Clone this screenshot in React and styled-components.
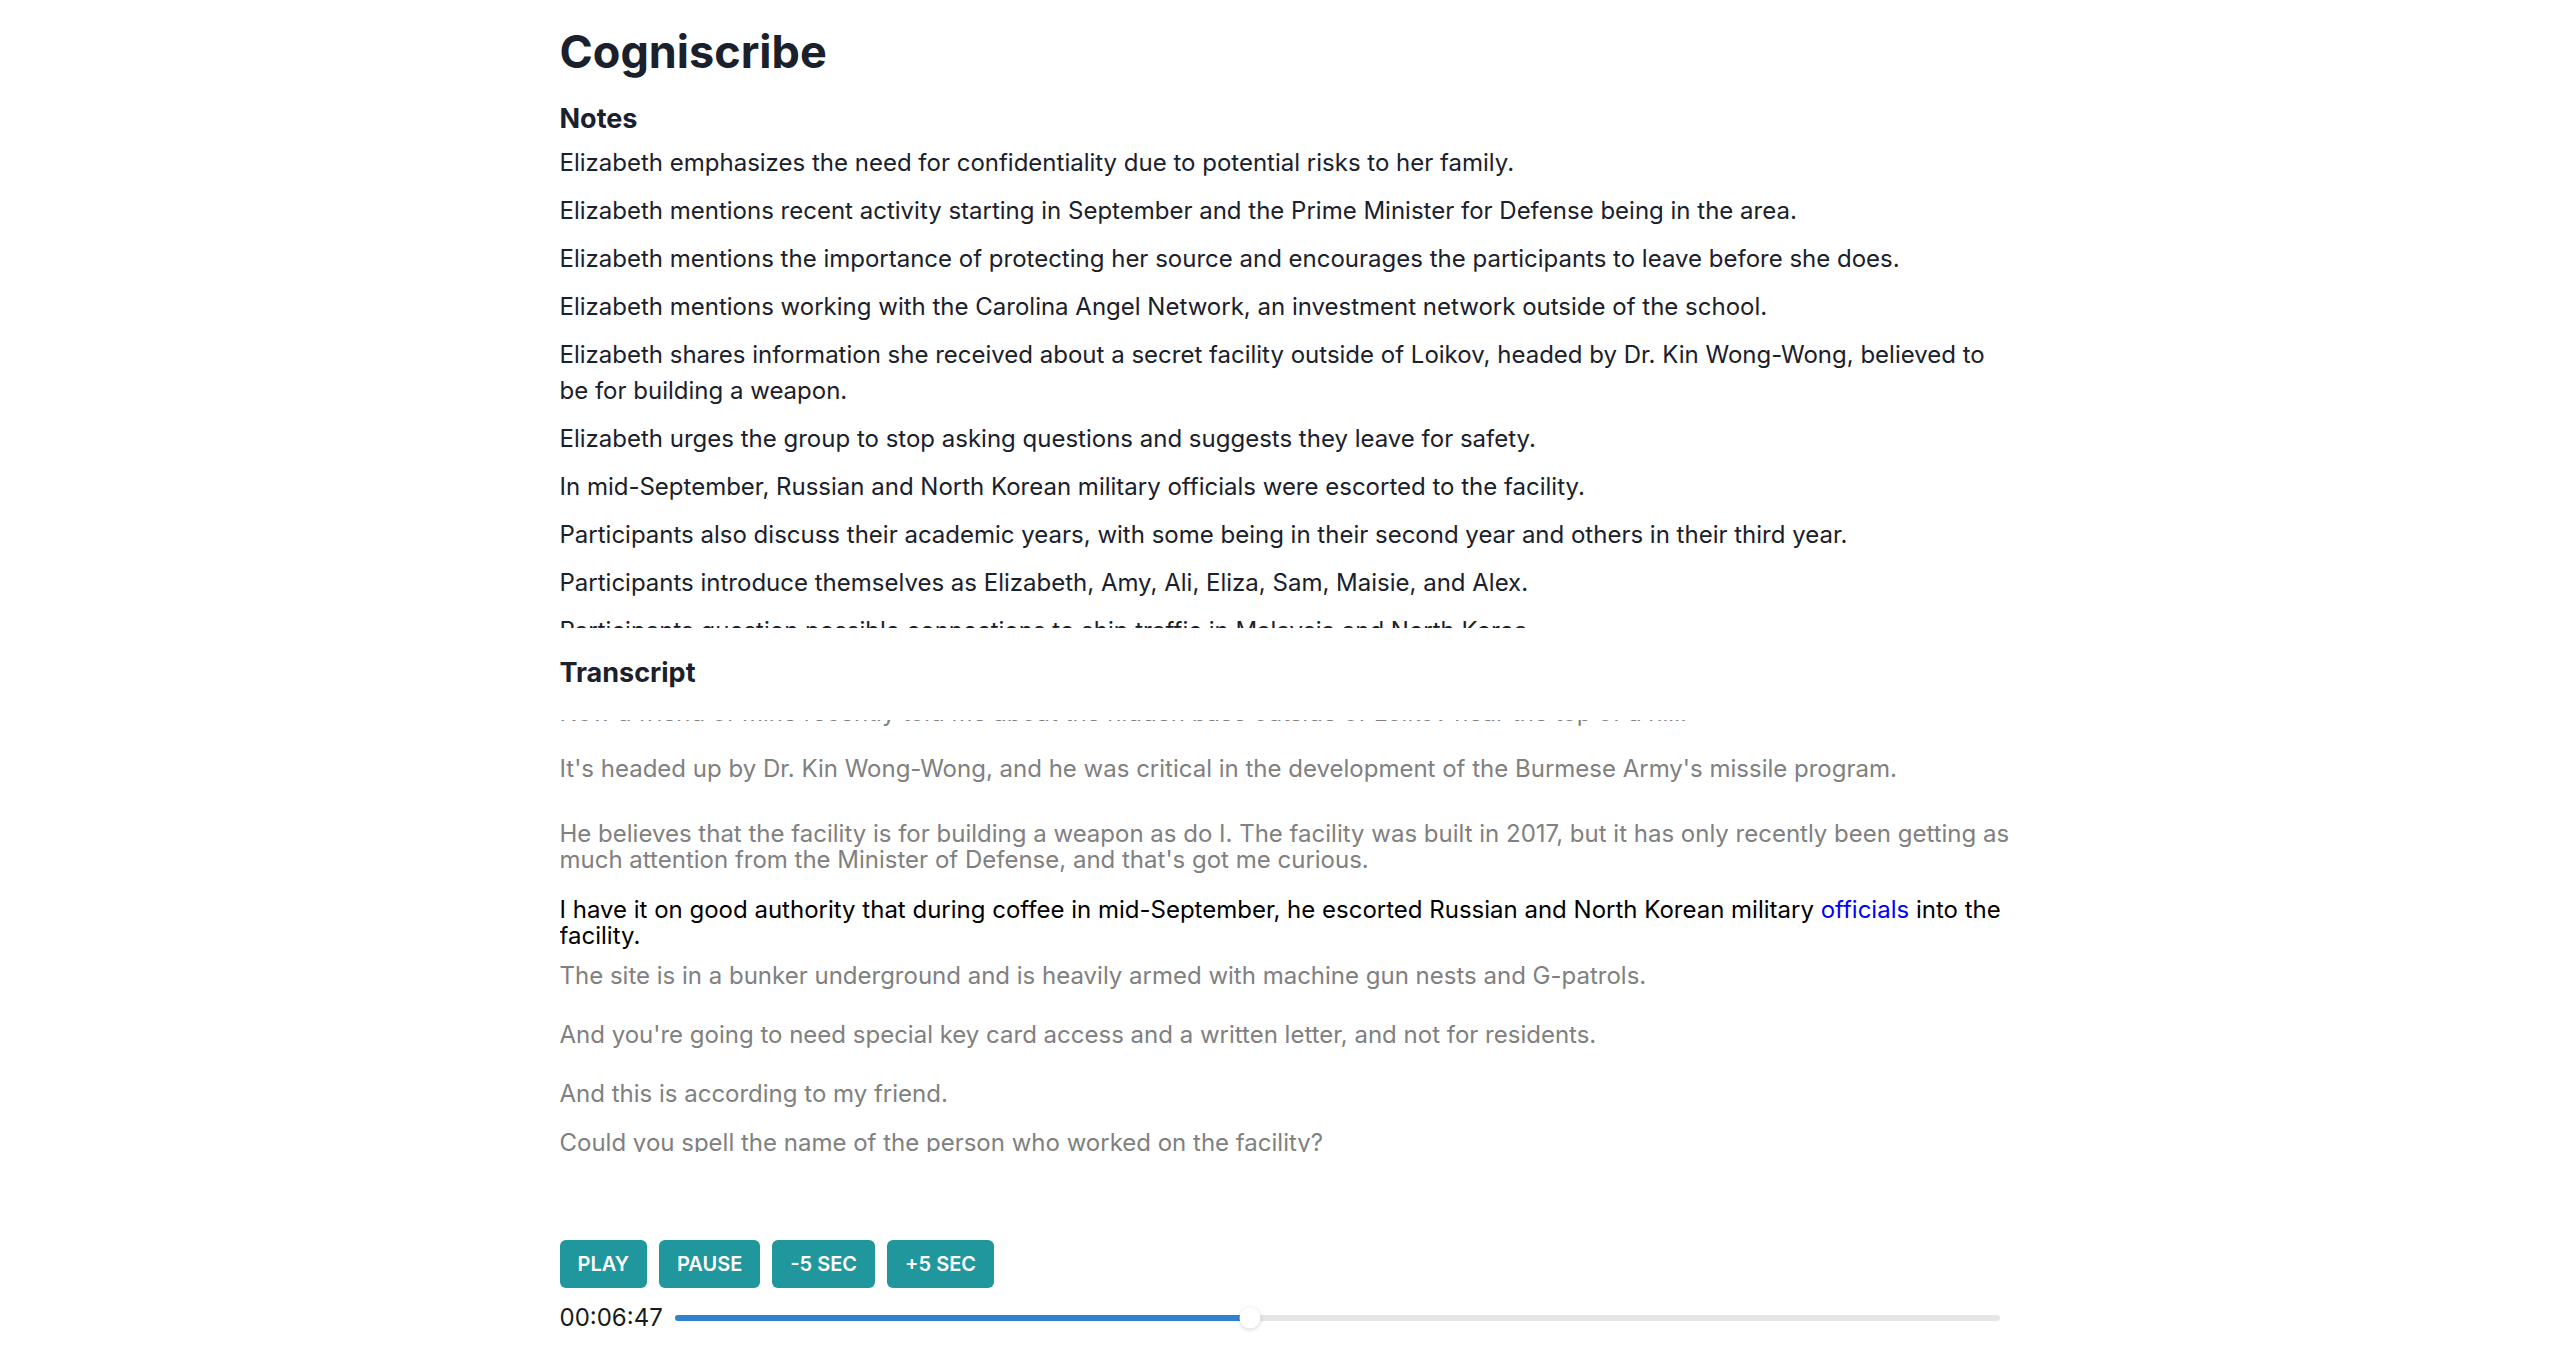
import styled, { createGlobalStyle } from "styled-components";

const GlobalStyle = createGlobalStyle`
  body {
    margin: 0;
    background: #ffffff;
    font-family: Inter, "Noto Sans", sans-serif;
    color: #1a202c;
  }
`;

const notes = [
  "Elizabeth emphasizes the need for confidentiality due to potential risks to her family.",
  "Elizabeth mentions recent activity starting in September and the Prime Minister for Defense being in the area.",
  "Elizabeth mentions the importance of protecting her source and encourages the participants to leave before she does.",
  "Elizabeth mentions working with the Carolina Angel Network, an investment network outside of the school.",
  "Elizabeth shares information she received about a secret facility outside of Loikov, headed by Dr. Kin Wong-Wong, believed to be for building a weapon.",
  "Elizabeth urges the group to stop asking questions and suggests they leave for safety.",
  "In mid-September, Russian and North Korean military officials were escorted to the facility.",
  "Participants also discuss their academic years, with some being in their second year and others in their third year.",
  "Participants introduce themselves as Elizabeth, Amy, Ali, Eliza, Sam, Maisie, and Alex.",
  "Participants question possible connections to ship traffic in Malaysia and North Korea.",
];

// gap = space above each segment, in px
const transcript = [
  { gap: 0, text: "Now a friend of mine recently told me about the hidden base outside of Loikov near the top of a hill." },
  { gap: 30, text: "It's headed up by Dr. Kin Wong-Wong, and he was critical in the development of the Burmese Army's missile program." },
  { gap: 39, text: "He believes that the facility is for building a weapon as do I. The facility was built in 2017, but it has only recently been getting as much attention from the Minister of Defense, and that's got me curious." },
  {
    gap: 24,
    active: true,
    text: "I have it on good authority that during coffee in mid-September, he escorted Russian and North Korean military ",
    word: "officials",
    rest: " into the facility.",
  },
  { gap: 14, text: "The site is in a bunker underground and is heavily armed with machine gun nests and G-patrols." },
  { gap: 33, text: "And you're going to need special key card access and a written letter, and not for residents." },
  { gap: 33, text: "And this is according to my friend." },
  { gap: 23, text: "Could you spell the name of the person who worked on the facility?" },
];

const position = 407;
const duration = 938;

const formatTime = (s) =>
  [Math.floor(s / 3600), Math.floor((s % 3600) / 60), s % 60]
    .map((n) => String(n).padStart(2, "0"))
    .join(":");

export default function App() {
  const pct = (position / duration) * 100;

  return (
    <>
      <GlobalStyle />
      <Page>
        <Title>Cogniscribe</Title>

        <SectionHeading $top={2} $bottom={-2}>Notes</SectionHeading>
        <NotesBox>
          {notes.map((n) => (
            <Note key={n}>{n}</Note>
          ))}
        </NotesBox>

        <SectionHeading $top={29}>Transcript</SectionHeading>
        <TranscriptBox>
          <TranscriptList>
            {transcript.map((seg, i) => (
              <Segment key={i} $gap={seg.gap} $active={seg.active}>
                {seg.text}
                {seg.word && <Current>{seg.word}</Current>}
                {seg.rest}
              </Segment>
            ))}
          </TranscriptList>
        </TranscriptBox>

        <Controls>
          <ButtonRow>
            <ControlButton>Play</ControlButton>
            <ControlButton>Pause</ControlButton>
            <ControlButton>-5 sec</ControlButton>
            <ControlButton>+5 sec</ControlButton>
          </ButtonRow>
          <SeekRow>
            <Time>{formatTime(position)}</Time>
            <Track>
              <Filled style={{ width: `${pct}%` }} />
              <Thumb style={{ left: `${pct}%` }} />
            </Track>
          </SeekRow>
        </Controls>
      </Page>
    </>
  );
}

const Page = styled.main`
  width: 1440px;
  margin: 0 auto;
  padding-top: 25px;
  display: flex;
  flex-direction: column;
`;

const Title = styled.h1`
  margin: 0 0 22px;
  font-size: 45px;
  line-height: 1.2;
  font-weight: 700;
  color: #1a202c;
`;

const SectionHeading = styled.h2`
  margin: ${({ $top }) => $top || 0}px 0 ${({ $bottom }) => $bottom || 0}px;
  font-size: 27px;
  line-height: 1.2;
  font-weight: 700;
  color: #1a202c;
`;

const NotesBox = styled.div`
  height: 495px;
  overflow: hidden;
`;

const Note = styled.p`
  margin: 12px 0 0;
  font-size: 24px;
  line-height: 36px;
  color: #1a202c;
`;

const TranscriptBox = styled.div`
  margin-top: 30px;
  width: calc(100% + 24px);
  height: 432px;
  overflow: hidden;
`;

const TranscriptList = styled.div`
  margin-top: -20px;
  display: flex;
  flex-direction: column;
`;

const Segment = styled.p`
  margin: ${({ $gap }) => $gap}px 0 0;
  font-size: 24px;
  line-height: 26px;
  color: ${({ $active }) => ($active ? "#000000" : "#808080")};
`;

const Current = styled.span`
  color: #0000ff;
`;

const Controls = styled.div`
  margin-top: 88px;
  display: flex;
  flex-direction: column;
  gap: 12px;
`;

const ButtonRow = styled.div`
  display: flex;
  gap: 12px;
`;

const ControlButton = styled.button`
  height: 48px;
  padding: 0 18px;
  border: none;
  border-radius: 6px;
  background: #1f979c;
  color: #ffffff;
  font-family: Inter, sans-serif;
  font-size: 20px;
  font-weight: 600;
  text-transform: uppercase;
  cursor: pointer;
`;

const SeekRow = styled.div`
  display: flex;
  align-items: center;
  gap: 12px;
  height: 36px;
`;

const Time = styled.span`
  font-size: 24px;
  color: #1a1a1a;
`;

const Track = styled.div`
  position: relative;
  flex: 1;
  height: 6px;
  border-radius: 3px;
  background: #e5e5e5;
`;

const Filled = styled.div`
  height: 100%;
  border-radius: 3px 0 0 3px;
  background: #3182ce;
`;

const Thumb = styled.div`
  position: absolute;
  top: 50%;
  width: 21px;
  height: 21px;
  border-radius: 50%;
  background: #ffffff;
  box-shadow: 0 1px 4px rgba(0, 0, 0, 0.18);
  transform: translate(-50%, -50%);
`;
